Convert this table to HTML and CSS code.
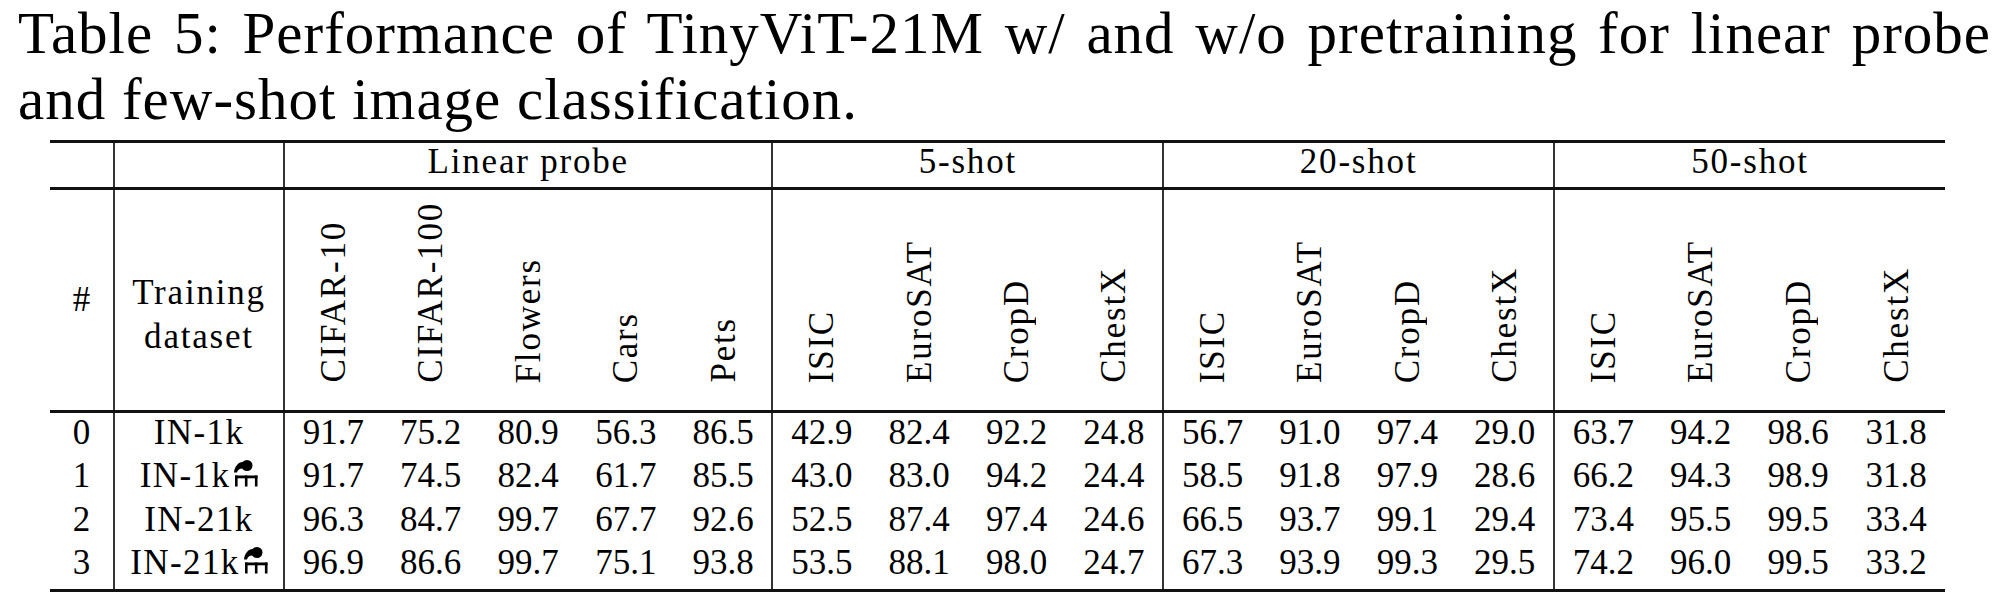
FILE: index.html
```html
<!DOCTYPE html>
<html lang="en">
<head>
<meta charset="utf-8">
<title>Table 5</title>
<link rel="stylesheet" href="styles.css">
</head>
<body>
<div class="page">
  <div class="caption">
    <div class="caption-line1">Table 5: Performance of TinyViT-21M w/ and w/o pretraining for linear probe</div>
    <div class="caption-line2">and few-shot image classification.</div>
  </div>
  <table class="results">
    <colgroup class="g-sep"><col class="c-num"></colgroup>
    <colgroup class="g-sep"><col class="c-ds"></colgroup>
    <colgroup class="g-sep"><col class="c-val"><col class="c-val"><col class="c-val"><col class="c-val"><col class="c-val"></colgroup>
    <colgroup class="g-sep"><col class="c-val"><col class="c-val"><col class="c-val"><col class="c-val"></colgroup>
    <colgroup class="g-sep"><col class="c-val"><col class="c-val"><col class="c-val"><col class="c-val"></colgroup>
    <colgroup><col class="c-val"><col class="c-val"><col class="c-val"><col class="c-val"></colgroup>
    <thead>
      <tr class="group-row">
        <th></th><th></th>
        <th colspan="5" class="lbl">Linear probe</th>
        <th colspan="4" class="lbl">5-shot</th>
        <th colspan="4" class="lbl">20-shot</th>
        <th colspan="4" class="lbl">50-shot</th>
      </tr>
      <tr class="label-row">
        <th class="hash">#</th>
        <th class="ds-head lbl">Training<br>dataset</th>
        <th class="rot-cell"><span class="rot lbl">CIFAR-10</span></th>
        <th class="rot-cell"><span class="rot lbl">CIFAR-100</span></th>
        <th class="rot-cell"><span class="rot lbl">Flowers</span></th>
        <th class="rot-cell"><span class="rot lbl">Cars</span></th>
        <th class="rot-cell"><span class="rot lbl">Pets</span></th>
        <th class="rot-cell"><span class="rot lbl">ISIC</span></th>
        <th class="rot-cell"><span class="rot lbl">EuroSAT</span></th>
        <th class="rot-cell"><span class="rot lbl">CropD</span></th>
        <th class="rot-cell"><span class="rot lbl">ChestX</span></th>
        <th class="rot-cell"><span class="rot lbl">ISIC</span></th>
        <th class="rot-cell"><span class="rot lbl">EuroSAT</span></th>
        <th class="rot-cell"><span class="rot lbl">CropD</span></th>
        <th class="rot-cell"><span class="rot lbl">ChestX</span></th>
        <th class="rot-cell"><span class="rot lbl">ISIC</span></th>
        <th class="rot-cell"><span class="rot lbl">EuroSAT</span></th>
        <th class="rot-cell"><span class="rot lbl">CropD</span></th>
        <th class="rot-cell"><span class="rot lbl">ChestX</span></th>
      </tr>
    </thead>
    <tbody>
      <tr>
        <td>0</td><td class="ds">IN-1k</td>
        <td>91.7</td><td>75.2</td><td>80.9</td><td>56.3</td><td>86.5</td>
        <td>42.9</td><td>82.4</td><td>92.2</td><td>24.8</td>
        <td>56.7</td><td>91.0</td><td>97.4</td><td>29.0</td>
        <td>63.7</td><td>94.2</td><td>98.6</td><td>31.8</td>
      </tr>
      <tr>
        <td>1</td><td class="ds">IN-1k<svg class="distill" viewBox="0 0 27 28" aria-hidden="true"><circle cx="16" cy="6.5" r="5.5"/><path d="M12 3 C7 3 3.5 8 3 13.5 L6 13.5 C6.8 10.5 9 9 13 9.5 Z"/><rect x="4" y="16.5" width="22.5" height="2.8"/><rect x="4" y="16.5" width="2.6" height="11"/><rect x="13.9" y="16.5" width="2.6" height="11"/><rect x="23.9" y="16.5" width="2.6" height="11"/></svg></td>
        <td>91.7</td><td>74.5</td><td>82.4</td><td>61.7</td><td>85.5</td>
        <td>43.0</td><td>83.0</td><td>94.2</td><td>24.4</td>
        <td>58.5</td><td>91.8</td><td>97.9</td><td>28.6</td>
        <td>66.2</td><td>94.3</td><td>98.9</td><td>31.8</td>
      </tr>
      <tr>
        <td>2</td><td class="ds">IN-21k</td>
        <td>96.3</td><td>84.7</td><td>99.7</td><td>67.7</td><td>92.6</td>
        <td>52.5</td><td>87.4</td><td>97.4</td><td>24.6</td>
        <td>66.5</td><td>93.7</td><td>99.1</td><td>29.4</td>
        <td>73.4</td><td>95.5</td><td>99.5</td><td>33.4</td>
      </tr>
      <tr class="last-row">
        <td>3</td><td class="ds">IN-21k<svg class="distill" viewBox="0 0 27 28" aria-hidden="true"><circle cx="16" cy="6.5" r="5.5"/><path d="M12 3 C7 3 3.5 8 3 13.5 L6 13.5 C6.8 10.5 9 9 13 9.5 Z"/><rect x="4" y="16.5" width="22.5" height="2.8"/><rect x="4" y="16.5" width="2.6" height="11"/><rect x="13.9" y="16.5" width="2.6" height="11"/><rect x="23.9" y="16.5" width="2.6" height="11"/></svg></td>
        <td>96.9</td><td>86.6</td><td>99.7</td><td>75.1</td><td>93.8</td>
        <td>53.5</td><td>88.1</td><td>98.0</td><td>24.7</td>
        <td>67.3</td><td>93.9</td><td>99.3</td><td>29.5</td>
        <td>74.2</td><td>96.0</td><td>99.5</td><td>33.2</td>
      </tr>
    </tbody>
  </table>
</div>
</body>
</html>
```

FILE: styles.css
```css
html, body {
  margin: 0;
  padding: 0;
  background: #ffffff;
  color: #000000;
  font-family: "Liberation Serif", "Times New Roman", serif;
}

.page {
  padding: 0 0 0 18px;
}

.caption {
  width: 1973px;
  font-size: 59px;
  line-height: 66px;
  letter-spacing: 1px;
}

.caption-line1 {
  text-align: justify;
  text-align-last: justify;
}

.results {
  margin: 8px 0 0 32px;
  width: 1895px;
  table-layout: fixed;
  border-collapse: collapse;
  font-size: 35px;
}

.c-num { width: 64px; }
.c-ds { width: 170px; }
.c-val { width: 97.7px; }

.g-sep {
  border-right: 2px solid #333333;
}

.results th,
.results td {
  padding: 0;
  text-align: center;
  font-weight: normal;
  white-space: nowrap;
}

.lbl {
  letter-spacing: 1.8px;
}

.ds {
  letter-spacing: 1.4px;
}

.group-row {
  border-top: 3px solid #111111;
  border-bottom: 3px solid #111111;
  height: 47px;
}

.group-row th {
  vertical-align: top;
  line-height: 37px;
}

.label-row {
  height: 223px;
}

.label-row th {
  vertical-align: bottom;
}

.rot-cell {
  line-height: 0;
  padding-bottom: 27px !important;
}

.rot {
  display: inline-block;
  writing-mode: vertical-rl;
  transform: rotate(180deg);
  line-height: 35px;
  vertical-align: top;
}

.hash {
  line-height: 44px;
  padding-bottom: 88px !important;
}

.ds-head {
  line-height: 44px;
  padding-bottom: 51px !important;
}

.results tbody {
  border-top: 3px solid #111111;
  border-bottom: 3px solid #111111;
}

.results tbody td {
  line-height: 39.33px;
  padding-bottom: 4px;
  vertical-align: top;
}

.results tbody .last-row td {
  padding-bottom: 6.5px;
}

.distill {
  width: 27px;
  height: 28px;
  margin-left: 1px;
  vertical-align: baseline;
  fill: #000000;
}
```
